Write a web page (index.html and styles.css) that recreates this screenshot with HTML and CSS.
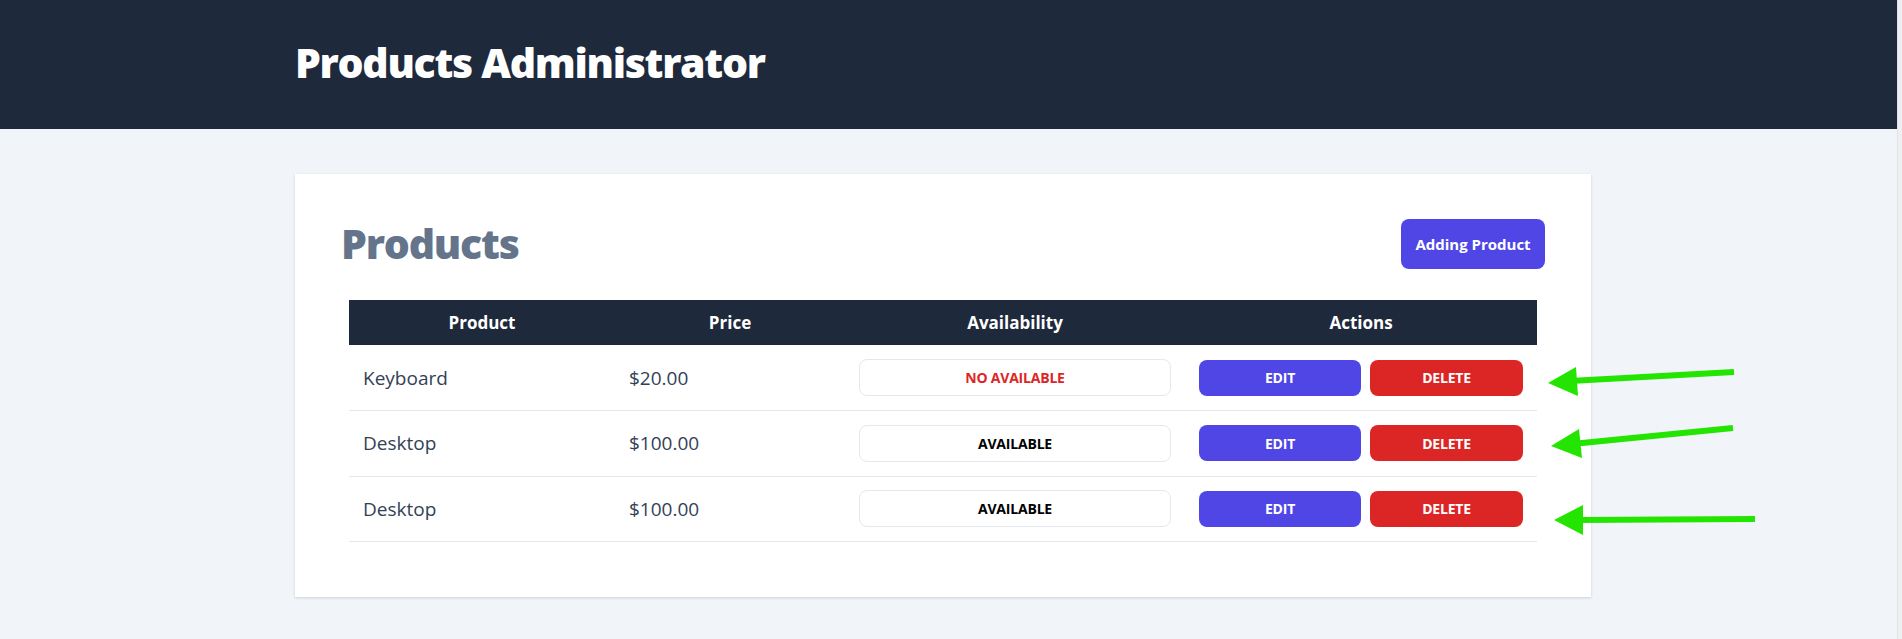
FILE: index.html
```html
<!DOCTYPE html>
<html lang="en">
<head>
<meta charset="utf-8">
<title>Products Administrator</title>
<link rel="stylesheet" href="styles.css">
</head>
<body>
<div class="page">
  <div class="main">
    <header class="topbar">
      <div class="container">
        <h1 class="app-title">Products Administrator</h1>
      </div>
    </header>
    <div class="container">
      <section class="card">
        <div class="card-head">
          <h2 class="card-title">Products</h2>
          <button class="btn-add">Adding Product</button>
        </div>
        <table class="products">
          <colgroup>
            <col class="c-product">
            <col class="c-price">
            <col class="c-avail">
            <col class="c-actions">
          </colgroup>
          <thead>
            <tr>
              <th>Product</th>
              <th>Price</th>
              <th>Availability</th>
              <th>Actions</th>
            </tr>
          </thead>
          <tbody>
            <tr>
              <td>Keyboard</td>
              <td>$20.00</td>
              <td><div class="avail avail-no">NO AVAILABLE</div></td>
              <td><div class="actions"><button class="btn-edit">EDIT</button><button class="btn-delete">DELETE</button></div></td>
            </tr>
            <tr>
              <td>Desktop</td>
              <td>$100.00</td>
              <td><div class="avail">AVAILABLE</div></td>
              <td><div class="actions"><button class="btn-edit">EDIT</button><button class="btn-delete">DELETE</button></div></td>
            </tr>
            <tr>
              <td>Desktop</td>
              <td>$100.00</td>
              <td><div class="avail">AVAILABLE</div></td>
              <td><div class="actions"><button class="btn-edit">EDIT</button><button class="btn-delete">DELETE</button></div></td>
            </tr>
          </tbody>
        </table>
      </section>
    </div>
  </div>
  <div class="scrollbar"></div>
</div>
<svg class="annotations" width="1902" height="639" viewBox="0 0 1902 639" aria-hidden="true">
  <g stroke="#24e402" stroke-width="6" fill="none">
    <line x1="1734" y1="372" x2="1570" y2="381"/>
    <line x1="1733" y1="428" x2="1572" y2="444"/>
    <line x1="1755" y1="519" x2="1576" y2="520"/>
  </g>
  <g fill="#24e402">
    <polygon points="1548,383 1576,367 1578,396"/>
    <polygon points="1551,446 1579,429 1582,458"/>
    <polygon points="1554,520 1583,505 1583,535"/>
  </g>
</svg>
</body>
</html>
```

FILE: styles.css
```css
html, body {
  margin: 0;
  padding: 0;
}

body {
  background: #f1f5f9;
  font-family: "Open Sans", "Noto Sans", sans-serif;
  color: #334155;
  width: 1902px;
  height: 639px;
  overflow: hidden;
  position: relative;
}

.page {
  display: flex;
  height: 639px;
}

.main {
  flex: 1;
  min-width: 0;
}

.scrollbar {
  width: 4px;
  background: #eeeff1;
  border-left: 1px solid #dfe1e5;
}

.container {
  width: 1296px;
  margin-left: 295px;
}

.topbar {
  background: #1e293b;
  height: 129px;
  display: flex;
  align-items: center;
  padding-bottom: 4px;
  box-sizing: border-box;
}

.app-title {
  margin: 0;
  color: #ffffff;
  font-size: 41px;
  font-weight: 800;
  line-height: 1.2;
  letter-spacing: -1.3px;
}

.card {
  margin-top: 45px;
  background: #ffffff;
  padding: 45px 46px 55px;
  box-shadow: 0 1px 3px rgba(15, 23, 42, 0.10), 0 1px 2px rgba(15, 23, 42, 0.06);
}

.card-head {
  display: flex;
  align-items: center;
  justify-content: space-between;
  height: 50px;
}

.card-title {
  margin: 0;
  color: #64748b;
  font-size: 41px;
  font-weight: 800;
  line-height: 1.2;
  letter-spacing: -1.2px;
}

button {
  font-family: inherit;
  border: 0;
  cursor: pointer;
}

.btn-add {
  height: 50px;
  width: 144px;
  padding: 0;
  border-radius: 8px;
  background: #4f46e5;
  color: #ffffff;
  font-size: 15px;
  font-weight: 700;
}

.products {
  margin: 31px 8px 0;
  width: 1188px;
  border-collapse: collapse;
  table-layout: fixed;
}

.c-product { width: 266px; }
.c-price { width: 230px; }
.c-avail { width: 340px; }
.c-actions { width: 352px; }

.products th {
  background: #1e293b;
  color: #ffffff;
  height: 45px;
  padding: 0;
  font-size: 17px;
  font-weight: 700;
  text-align: center;
}

.products td {
  height: 65.5px;
  padding: 0 14px;
  box-sizing: border-box;
  border-bottom: 1px solid #e5e7eb;
  font-size: 19px;
  text-align: left;
  vertical-align: middle;
}

.avail {
  height: 37px;
  box-sizing: border-box;
  border: 1px solid #e5e7eb;
  border-radius: 8px;
  display: flex;
  align-items: center;
  justify-content: center;
  font-size: 14px;
  font-weight: 700;
  color: #000000;
  letter-spacing: -0.2px;
}

.avail-no {
  color: #dc2626;
}

.actions {
  display: flex;
  gap: 9px;
}

.btn-edit,
.btn-delete {
  height: 36px;
  border-radius: 8px;
  color: #ffffff;
  font-size: 14px;
  font-weight: 700;
  padding: 0;
  letter-spacing: -0.2px;
}

.btn-edit {
  width: 163px;
  background: #4f46e5;
}

.btn-delete {
  width: 154px;
  background: #dc2626;
}

.annotations {
  position: absolute;
  top: 0;
  left: 0;
  pointer-events: none;
}
```
